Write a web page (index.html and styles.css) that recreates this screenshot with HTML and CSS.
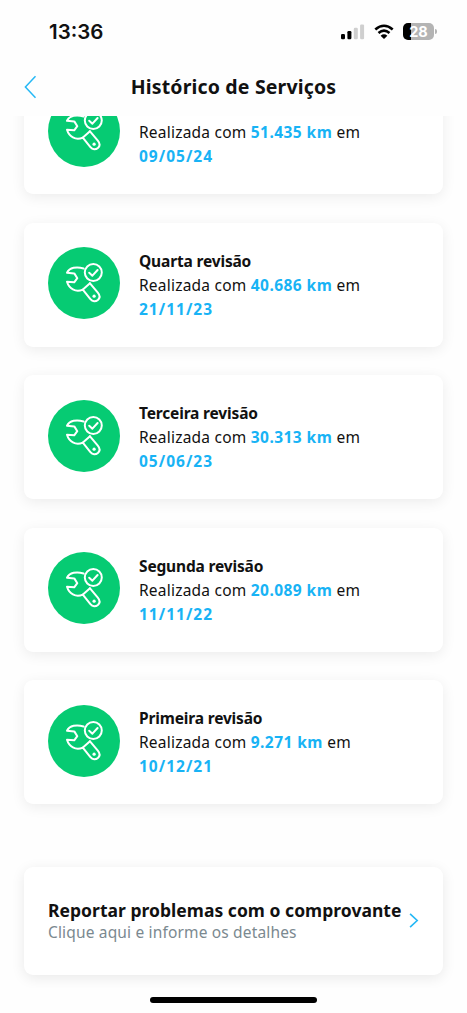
FILE: index.html
```html
<!DOCTYPE html>
<html lang="pt-BR">
<head>
<meta charset="utf-8">
<title>Histórico de Serviços</title>
<link rel="stylesheet" href="styles.css">
</head>
<body>
<svg class="defs" width="0" height="0">
  <symbol id="service" viewBox="0 0 72 72">
    <circle cx="36" cy="36" r="36" fill="#06cb73"/>
    <g fill="none" stroke="#fff" stroke-width="2" stroke-linecap="round" stroke-linejoin="round">
      <path d="M35.6 21.5C28.5 19.2 21.5 20.5 19 25.8L26.3 26.4L29.3 31.2L26.2 35.3L19 34.8C21 41.5 27.5 45.8 34.8 42.6L42.4 52.1C44.6 54.8 47.6 54.8 49.9 52.9C52.1 51 52 48.3 49.8 45.7L41.8 36.2"/>
      <path d="M35.2 42.2L42 36.3"/>
      <circle cx="45.3" cy="25.5" r="8.5"/>
      <path d="M41.2 25.7L44.4 28.7L49.6 23"/>
    </g>
    <circle cx="46.1" cy="49.2" r="1.6" fill="#fff"/>
  </symbol>
</svg>
<div class="screen">
  <header class="status">
    <span class="clock">13:36</span>
    <div class="indicators">
      <svg class="signal" width="24" height="16" viewBox="0 0 24 16">
        <rect x="0" y="10" width="4" height="5.3" rx="1.2"/>
        <rect x="6.4" y="7" width="4" height="8.3" rx="1.2"/>
        <rect x="12.8" y="3.8" width="4" height="11.5" rx="1.2" fill="#cfcfcf"/>
        <rect x="19.1" y="0.5" width="4" height="14.8" rx="1.2" fill="#cfcfcf"/>
      </svg>
      <svg class="wifi" width="20" height="16" viewBox="0 0 20 16">
        <path d="M1.3 5.5Q10-2 18.7 5.5M4.5 9Q10 4.3 15.5 9" fill="none" stroke="#000" stroke-width="2.6"/>
        <path d="M10 15L6.6 11.7Q10 9 13.4 11.7Z"/>
      </svg>
      <div class="battery"><span class="level">28</span><i class="terminal"></i></div>
    </div>
  </header>
  <nav class="titlebar">
    <svg class="back" width="13" height="24" viewBox="0 0 13 24"><path d="M11.5 1.3L1.4 12L11.5 22.7" fill="none" stroke="#25b8f5" stroke-width="1.5"/></svg>
    <h1 class="title">Histórico de Serviços</h1>
  </nav>
  <main class="content">
    <div class="list">
      <article class="card"><svg class="icon"><use href="#service"/></svg><div class="info"><h2 class="name">&nbsp;</h2><p class="detail">Realizada com <b>51.435 km</b> em<br><b class="date">09/05/24</b></p></div></article>
      <article class="card"><svg class="icon"><use href="#service"/></svg><div class="info"><h2 class="name">Quarta revisão</h2><p class="detail">Realizada com <b>40.686 km</b> em<br><b class="date">21/11/23</b></p></div></article>
      <article class="card"><svg class="icon"><use href="#service"/></svg><div class="info"><h2 class="name">Terceira revisão</h2><p class="detail">Realizada com <b>30.313 km</b> em<br><b class="date">05/06/23</b></p></div></article>
      <article class="card"><svg class="icon"><use href="#service"/></svg><div class="info"><h2 class="name">Segunda revisão</h2><p class="detail">Realizada com <b>20.089 km</b> em<br><b class="date">11/11/22</b></p></div></article>
      <article class="card"><svg class="icon"><use href="#service"/></svg><div class="info"><h2 class="name">Primeira revisão</h2><p class="detail">Realizada com <b>9.271 km</b> em<br><b class="date">10/12/21</b></p></div></article>
    </div>
    <div class="report">
      <div class="report-text">
        <h2 class="report-title">Reportar problemas com o comprovante</h2>
        <p class="report-sub">Clique aqui e informe os detalhes</p>
      </div>
      <svg class="chevron" width="11" height="17" viewBox="0 0 11 17"><path d="M1.2 1.2L9 8.5L1.2 15.8" fill="none" stroke="#25b8f5" stroke-width="1.8"/></svg>
    </div>
  </main>
  <div class="home"></div>
</div>
</body>
</html>
```
FILE: styles.css
```css
* { box-sizing: border-box; margin: 0; padding: 0; }
body { background: #fefefe; color: #111; font-family: "Noto Sans", sans-serif; }
.defs { display: block; }
.screen { width: 467px; height: 1013px; overflow: hidden; display: flex; flex-direction: column; }
.status { height: 63px; flex: none; display: flex; justify-content: space-between; align-items: center; padding: 0 32px 0 49px; }
.clock { font: 600 20.5px/24px Inter, sans-serif; letter-spacing: 0; }
.indicators { display: flex; align-items: center; gap: 9px; }
.signal { margin-right: 0; }
.battery { width: 31px; height: 17px; border-radius: 5px; background: linear-gradient(90deg, #000 0 8.5px, #b4b4b4 8.5px); position: relative; text-align: center; margin-right: 1px; }
.level { display: block; color: #fff; font: 700 14.5px/17px Inter, sans-serif; }
.terminal { position: absolute; right: -2.5px; top: 6px; width: 1.5px; height: 5px; border-radius: 0 2px 2px 0; background: #b4b4b4; }
.titlebar { height: 53px; flex: none; display: grid; grid-template-columns: 40px 1fr 40px; align-items: center; padding: 0 24px 5px; }
.title { font-size: 19.5px; line-height: 28px; font-weight: 700; text-align: center; white-space: nowrap; letter-spacing: 0.16px; }
.content { height: 872px; flex: none; overflow: hidden; padding: 0 24px; }
.list { display: flex; flex-direction: column; gap: 28.5px; margin-top: -46px; }
.card { height: 124px; flex: none; display: flex; align-items: center; gap: 19px; padding: 0 24px 3px; background: #fff; border-radius: 9px; box-shadow: 0 3px 14px rgba(0,0,0,.075); }
.icon { width: 72px; height: 72px; flex: none; }
.info { padding-top: 3px; white-space: nowrap; }
.name { font-size: 15.5px; line-height: 24px; font-weight: 700; letter-spacing: -0.16px; }
.detail { font-size: 15.5px; line-height: 24px; letter-spacing: 0.22px; }
.detail b { color: #18b3f5; font-weight: 700; letter-spacing: 0.45px; }
.detail .date { letter-spacing: 1px; }
.report { height: 108px; margin-top: 63px; display: flex; align-items: center; gap: 8px; padding: 0 24px 1px; background: #fff; border-radius: 9px; box-shadow: 0 3px 14px rgba(0,0,0,.085); }
.report-text { width: 353px; flex: none; white-space: nowrap; }
.report-title { font-size: 17.5px; line-height: 24px; font-weight: 700; letter-spacing: 0.03px; }
.report-sub { font-size: 15.5px; line-height: 21px; color: #7b8990; letter-spacing: 0.16px; }
.home { width: 167px; height: 6px; flex: none; border-radius: 3px; background: #000; margin: 9px 0 0 150px; }
```
